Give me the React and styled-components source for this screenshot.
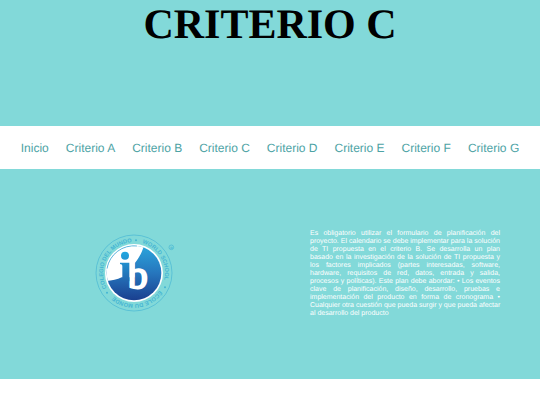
import React from 'react';
import styled, { createGlobalStyle } from 'styled-components';

const GlobalStyle = createGlobalStyle`
  body {
    margin: 0;
    background-color: #fff;
    font-family: "Liberation Sans", Arial, sans-serif;
    text-rendering: geometricPrecision;
  }
`;

const Header = styled.header`
  height: 126px;
  background-color: #82d9d9;
`;

const Title = styled.h1`
  margin: 0;
  color: #000;
  font-family: "Liberation Serif", "Times New Roman", serif;
  font-size: 42px;
  font-weight: 700;
  line-height: 50px;
  text-align: center;
`;

const Nav = styled.nav`
  display: flex;
  justify-content: center;
  align-items: center;
  gap: 17px;
  height: 43px;
  background-color: #fff;
`;

const NavLink = styled.a`
  color: #4da3a5;
  font-size: 12px;
  line-height: 16px;
  text-decoration: none;
  white-space: nowrap;
`;

const Content = styled.main`
  display: grid;
  grid-template-columns: minmax(0, 1fr) minmax(0, 1fr);
  align-items: center;
  height: 210px;
  background-color: #82d9d9;
`;

const LogoBox = styled.div`
  display: flex;
  justify-content: center;
`;

const Logo = styled.svg`
  display: block;
  width: 80px;
  height: 80px;
`;

const Description = styled.p`
  margin: 0 40px;
  color: #fff;
  font-size: 7px;
  line-height: 8px;
`;

const Line = styled.span`
  display: block;
  text-align: justify;
  text-align-last: justify;
  white-space: nowrap;

  &:last-child {
    text-align-last: left;
  }
`;

const links = [
  'Inicio',
  'Criterio A',
  'Criterio B',
  'Criterio C',
  'Criterio D',
  'Criterio E',
  'Criterio F',
  'Criterio G',
];

const lines = [
  'Es obligatorio utilizar el formulario de planificación del',
  'proyecto. El calendario se debe implementar para la solución',
  'de TI propuesta en el criterio B. Se desarrolla un plan',
  'basado en la investigación de la solución de TI propuesta y',
  'los factores implicados (partes interesadas, software,',
  'hardware, requisitos de red, datos, entrada y salida,',
  'procesos y políticas). Este plan debe abordar: • Los eventos',
  'clave de planificación, diseño, desarrollo, pruebas e',
  'implementación del producto en forma de cronograma •',
  'Cualquier otra cuestión que pueda surgir y que pueda afectar',
  'al desarrollo del producto',
];

const IbLogo = () => (
  <Logo viewBox="0 0 240 240" role="img" aria-label="IB World School">
    <defs>
      <linearGradient id="disk" x1="0" y1="0" x2="0" y2="1">
        <stop offset="0" stopColor="#2ba5dc" />
        <stop offset="0.5" stopColor="#2676bd" />
        <stop offset="1" stopColor="#1a3f8f" />
      </linearGradient>
      <linearGradient id="stem" gradientUnits="userSpaceOnUse" x1="0" y1="55" x2="0" y2="142">
        <stop offset="0" stopColor="#22a6df" />
        <stop offset="1" stopColor="#2266ae" />
      </linearGradient>
      <clipPath id="diskClip">
        <circle cx="117" cy="117" r="82" />
      </clipPath>
      <path id="leftArc" d="M117 210 A93 93 0 0 1 117 24 A93 93 0 0 1 210 117" />
      <path id="rightArc" d="M24 117 A93 93 0 0 1 210 117 A93 93 0 0 1 117 210" />
      <path id="bottomArc" d="M210 117 A93 93 0 0 1 24 117" />
    </defs>
    <circle cx="117" cy="117" r="114" fill="none" stroke="#45b5d3" strokeWidth="2" />
    <circle cx="117" cy="117" r="87" fill="#fff" />
    <circle cx="117" cy="117" r="82" fill="url(#disk)" />
    <path
      d="M30 141 C50 140 66 137 80 130 L119 130 L119 88 C127 78 135 66 141 52 L146 38 L130 20 L20 20 Z"
      fill="#fff"
      clipPath="url(#diskClip)"
    />
    <path d="M36 104 A82 82 0 0 1 126 36" fill="none" stroke="#2a9ed3" strokeWidth="2" />
    <text
      x="98"
      y="162"
      fontFamily="Liberation Serif, serif"
      fontSize="120"
      fill="#fff"
      stroke="#fff"
      strokeWidth="6"
    >
      b
    </text>
    <circle cx="90" cy="65" r="12" fill="url(#stem)" />
    <path d="M75 86 H103 V142 H82 V95 Q82 90 75 90 Z" fill="url(#stem)" />
    <g fontFamily="Liberation Sans, sans-serif" fontSize="17" fontWeight="700" fill="#45b5d3">
      <text textAnchor="middle">
        <textPath href="#leftArc" startOffset="192">COLEGIO DEL MUNDO</textPath>
      </text>
      <text textAnchor="middle">
        <textPath href="#rightArc" startOffset="242">WORLD SCHOOL</textPath>
      </text>
      <text textAnchor="middle">
        <textPath href="#bottomArc" startOffset="134">ÉCOLE DU MONDE</textPath>
      </text>
    </g>
    <g fill="#45b5d3">
      <circle cx="123" cy="19" r="3" />
      <circle cx="210" cy="160" r="3" />
      <circle cx="36" cy="176" r="3" />
    </g>
    <circle cx="229" cy="40" r="7" fill="none" stroke="#45b5d3" strokeWidth="2" />
    <text
      x="229"
      y="44"
      textAnchor="middle"
      fontFamily="Liberation Sans, sans-serif"
      fontSize="10"
      fontWeight="700"
      fill="#45b5d3"
    >
      R
    </text>
  </Logo>
);

const App = () => (
  <>
    <GlobalStyle />
    <Header>
      <Title>CRITERIO C</Title>
    </Header>
    <Nav>
      {links.map(link => (
        <NavLink key={link} href="#">{link}</NavLink>
      ))}
    </Nav>
    <Content>
      <LogoBox>
        <IbLogo />
      </LogoBox>
      <Description>
        {lines.map(line => (
          <Line key={line}>{line} </Line>
        ))}
      </Description>
    </Content>
  </>
);

export default App;
